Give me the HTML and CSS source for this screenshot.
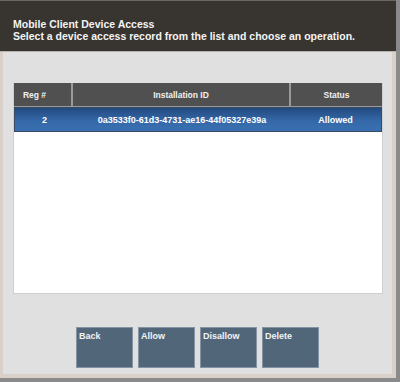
FILE: index.html
```html
<!DOCTYPE html>
<html lang="en">
<head>
    <meta charset="UTF-8">
    <title>Mobile Client Device Access</title>
    <link rel="stylesheet" href="styles.css">
</head>
<body>
    <div class="screen">
        <div class="header">
            <h1>Mobile Client Device Access</h1>
            <p>Select a device access record from the list and choose an operation.</p>
        </div>

        <div class="content">
            <div class="grid">
                <div class="grid-head">
                    <div class="col col-reg">Reg #</div>
                    <div class="col col-id">Installation ID</div>
                    <div class="col col-status">Status</div>
                </div>
                <div class="grid-body">
                    <div class="grid-row selected">
                        <div class="col col-reg">2</div>
                        <div class="col col-id">0a3533f0-61d3-4731-ae16-44f05327e39a</div>
                        <div class="col col-status">Allowed</div>
                    </div>
                </div>
            </div>

            <div class="actions">
                <button class="btn">Back</button>
                <button class="btn">Allow</button>
                <button class="btn">Disallow</button>
                <button class="btn">Delete</button>
            </div>
        </div>
    </div>
</body>
</html>
```

FILE: styles.css
```css
* {
    margin: 0;
    padding: 0;
    box-sizing: border-box;
}

body {
    font-family: 'Liberation Sans', Arial, sans-serif;
    background-color: #8a8a8a;
    width: 400px;
    height: 382px;
    overflow: hidden;
}

.screen {
    width: 400px;
    height: 382px;
    display: flex;
    flex-direction: column;
    border-right: 4px solid #8a8a8a;
    border-bottom: 4px solid #8a8a8a;
    background-color: #e0e0e0;
}

.header {
    height: 52px;
    background-color: #38342f;
    border-top: 1px solid #6a6762;
    border-bottom: 1px solid #b4b2ae;
    padding: 17px 0 0 13px;
    color: #f4f4f4;
}

.header h1,
.header p {
    font-size: 10.5px;
    font-weight: bold;
    line-height: 12px;
}

.content {
    flex: 1;
    display: flex;
    flex-direction: column;
    border-left: 3px solid #d9d1c9;
    border-right: 4px solid #d9d1c9;
    border-bottom: 4px solid #d9d1c9;
    padding: 31px 0 0 10px;
}

.grid {
    width: 370px;
    height: 211px;
    background-color: #ffffff;
    border: 1px solid #cfcfcf;
    border-top: none;
}

.grid-head {
    display: flex;
    height: 24px;
    background-color: #505050;
    color: #f0f0f0;
    font-size: 8.5px;
    font-weight: bold;
    border-bottom: 1px solid #9a9a9a;
}

.col {
    display: flex;
    align-items: center;
    justify-content: center;
}

.col-reg {
    width: 57px;
}

.col-id {
    width: 218px;
}

.col-status {
    flex: 1;
}

.grid-head .col-reg {
    padding-right: 16px;
}

.grid-head .col + .col {
    border-left: 2px solid #9a9a9a;
}

.grid-row {
    display: flex;
    height: 25px;
    font-size: 9px;
    font-weight: bold;
}

.grid-row.selected {
    color: #ffffff;
    background: linear-gradient(#23497f, #3468a8 55%, #3a70b2);
    border: 1px solid #3a4a60;
}

.grid-row .col-reg {
    padding-left: 2px;
}

.grid-row .col-id {
    padding-left: 2px;
}

.actions {
    display: flex;
    gap: 5px;
    margin: 33px 0 0 63px;
}

.btn {
    width: 57px;
    height: 41px;
    background-color: #52667a;
    border: 1px solid #8494a4;
    color: #f2f2f2;
    font-family: inherit;
    font-size: 9px;
    font-weight: bold;
    text-align: left;
    display: flex;
    align-items: flex-start;
    padding: 3px 0 0 2px;
}
```
